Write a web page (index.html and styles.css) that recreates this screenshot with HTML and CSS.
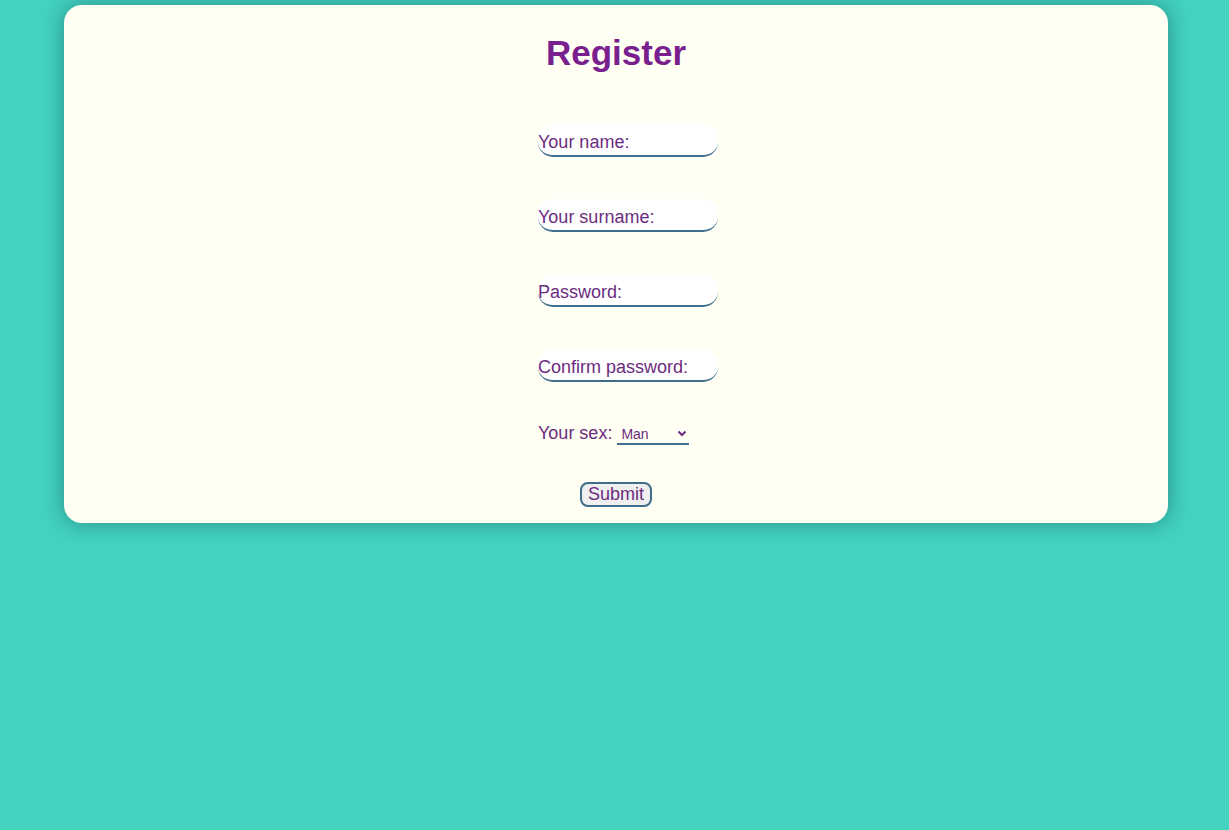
FILE: index.html
```html
<!DOCTYPE html>
<html>
<head>
<meta charset="utf-8">
<link rel="stylesheet" href="styles.css">
</head>
<body>
<div class="card">
  <h1 class="title">Register</h1>
  <form class="form">
    <input class="field" type="text" placeholder="Your name:">
    <input class="field" type="text" placeholder="Your surname:">
    <input class="field" type="password" placeholder="Password:">
    <input class="field" type="password" placeholder="Confirm password:">
    <div class="sex-row">
      <span class="sex-label">Your sex:</span>
      <span class="select-wrap">
        <span class="select-text">Man</span>
        <svg class="chev" width="10" height="7" viewBox="0 0 10 7"><path d="M1.5 1.5 L5 5 L8.5 1.5" fill="none" stroke="#6e2a83" stroke-width="2"/></svg>
      </span>
    </div>
    <button class="submit" type="button">Submit</button>
  </form>
</div>
</body>
</html>
```
FILE: styles.css
```css
html, body {
  margin: 0;
  padding: 0;
}
body {
  background: #43d3bf;
  font-family: "Liberation Sans", Arial, sans-serif;
  min-height: 830px;
  padding-top: 5px;
  box-sizing: border-box;
}
.card {
  width: 1104px;
  margin-left: 64px;
  background: #fffff4;
  border-radius: 18px;
  box-shadow: 0 0 22px rgba(20, 80, 90, 0.55);
  padding: 26px 0 16px;
  box-sizing: border-box;
}
.title {
  margin: 0;
  text-align: center;
  font-size: 35px;
  font-weight: bold;
  color: #7a1f8e;
  line-height: 41px;
  padding-top: 1px;
  height: 40px;
  box-sizing: border-box;
}
.form {
  display: flex;
  flex-direction: column;
  align-items: center;
  padding-left: 24px;
  margin-top: 53px;
}
.field {
  width: 180px;
  height: 33px;
  box-sizing: border-box;
  border: none;
  border-bottom: 2px solid #3f6e8c;
  border-radius: 15px;
  background: #ffffff;
  padding: 6px 0 0;
  margin: 0 0 42px;
  font-family: "Liberation Sans", Arial, sans-serif;
  font-size: 18px;
  color: #6b2c80;
  outline: none;
}
.field::placeholder {
  color: #6b2c80;
  opacity: 1;
}
.sex-row {
  width: 180px;
  display: flex;
  align-items: flex-end;
  margin-top: -2px;
  height: 23px;
}
.sex-label {
  font-size: 18px;
  color: #6b2c80;
  line-height: 20px;
  margin-right: 5px;
  position: relative;
  top: -2px;
}
.select-wrap {
  width: 72px;
  height: 19px;
  box-sizing: border-box;
  border-bottom: 2px solid #3f6e8c;
  display: flex;
  align-items: center;
  justify-content: space-between;
  padding: 0 2px 2px 4px;
}
.select-text {
  font-size: 14px;
  color: #6b2c80;
  line-height: 16px;
}
.chev {
  display: block;
}
.submit {
  margin-top: 37px;
  margin-right: 24px;
  width: 72px;
  height: 25px;
  box-sizing: border-box;
  border: 2px solid #3f6e8c;
  border-radius: 8px;
  background: #efeff0;
  color: #6b2c80;
  font-family: "Liberation Sans", Arial, sans-serif;
  font-size: 18px;
  padding: 0 0 1px;
  line-height: 20px;
}
```
